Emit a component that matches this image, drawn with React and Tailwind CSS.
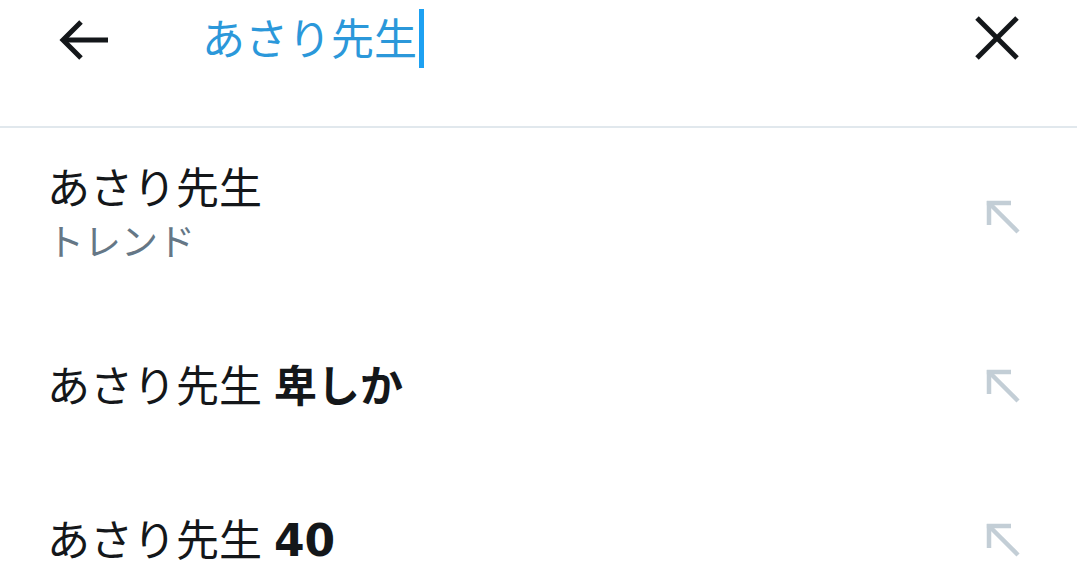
import React from "react";

const font = { fontFamily: '"Liberation Sans", "Noto Sans CJK JP", sans-serif' };

function ArrowUpLeft() {
  return (
    <svg width="40" height="40" viewBox="0 0 40 40" fill="none" stroke="#c3ced6" strokeWidth="4.5" strokeLinecap="butt">
      <path d="M7 5 V29" />
      <path d="M4.8 7 H29" />
      <path d="M7 7 L36 36" />
    </svg>
  );
}

function Row({ children, sub, height }) {
  return (
    <div className={`flex items-center justify-between pl-[47px] pr-[55px] ${height}`}>
      <div className="flex flex-col">
        <div className="text-[43px] leading-[50px] text-[#14171a] whitespace-nowrap">{children}</div>
        {sub && <div className="text-[37px] leading-[60px] text-[#657786]">{sub}</div>}
      </div>
      <div className={sub ? "mt-[-6px]" : "mt-[-4px]"}>
        <ArrowUpLeft />
      </div>
    </div>
  );
}

export default function App() {
  return (
    <div className="w-[1077px] h-[579px] bg-white overflow-hidden" style={font}>
      <div className="h-[128px] border-b-2 border-[#e1e8ed] flex items-start">
        <div className="w-[202px] h-[80px] flex items-center pl-[58px]">
          <svg width="52" height="44" viewBox="0 0 52 44" fill="none" stroke="#14171a" strokeWidth="5">
            <path d="M50 22 H6" />
            <path d="M23 4 L5 22 L23 40" />
          </svg>
        </div>
        <div className="flex-1 h-[80px] flex items-center">
          <span className="text-[43px] leading-[50px] text-[#2b98da]">あさり先生</span>
          <span className="w-[5px] h-[59px] bg-[#1da1f2] ml-[2px] mt-[-4px]"></span>
        </div>
        <div className="w-[120px] h-[80px] flex items-center pl-[16px] mt-[-2px]">
          <svg width="48" height="48" viewBox="0 0 48 48" fill="none" stroke="#14171a" strokeWidth="5">
            <path d="M4 4 L44 44" />
            <path d="M44 4 L4 44" />
          </svg>
        </div>
      </div>
      <Row sub="トレンド" height="h-[182px]">あさり先生</Row>
      <Row height="h-[154px]">
        あさり先生 <span className="font-bold">卑しか</span>
      </Row>
      <Row height="h-[154px]">
        あさり先生{" "}
        <span className="font-bold text-[44px]" style={{ fontFamily: '"DejaVu Sans", sans-serif' }}>40</span>
      </Row>
    </div>
  );
}
